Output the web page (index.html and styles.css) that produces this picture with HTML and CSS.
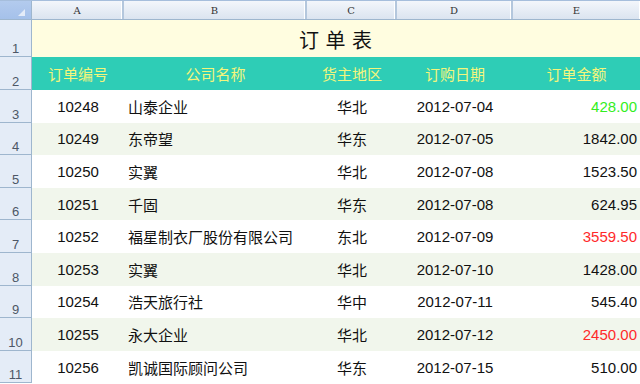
FILE: index.html
```html
<!DOCTYPE html>
<html lang="zh-CN">
<head>
<meta charset="utf-8">
<title>订单表</title>
<link rel="stylesheet" href="styles.css">
</head>
<body>
<div class="sheet">
  <div class="row colhead">
    <div class="corner"><span class="tri"></span></div>
    <div class="ch">A</div>
    <div class="ch">B</div>
    <div class="ch">C</div>
    <div class="ch">D</div>
    <div class="ch last">E</div>
  </div>
  <div class="row r-title">
    <div class="rh">1</div>
    <div class="title">订 单 表</div>
  </div>
  <div class="row r-head">
    <div class="rh">2</div>
    <div class="c">订单编号</div>
    <div class="c">公司名称</div>
    <div class="c">货主地区</div>
    <div class="c">订购日期</div>
    <div class="c">订单金额</div>
  </div>
  <div class="row r-data">
    <div class="rh">3</div><div class="c num">10248</div><div class="l">山泰企业</div><div class="c">华北</div><div class="c num">2012-07-04</div><div class="r num green">428.00</div>
  </div>
  <div class="row r-data alt">
    <div class="rh">4</div><div class="c num">10249</div><div class="l">东帝望</div><div class="c">华东</div><div class="c num">2012-07-05</div><div class="r num">1842.00</div>
  </div>
  <div class="row r-data">
    <div class="rh">5</div><div class="c num">10250</div><div class="l">实翼</div><div class="c">华北</div><div class="c num">2012-07-08</div><div class="r num">1523.50</div>
  </div>
  <div class="row r-data alt">
    <div class="rh">6</div><div class="c num">10251</div><div class="l">千固</div><div class="c">华东</div><div class="c num">2012-07-08</div><div class="r num">624.95</div>
  </div>
  <div class="row r-data">
    <div class="rh">7</div><div class="c num">10252</div><div class="l">福星制衣厂股份有限公司</div><div class="c">东北</div><div class="c num">2012-07-09</div><div class="r num red">3559.50</div>
  </div>
  <div class="row r-data alt">
    <div class="rh">8</div><div class="c num">10253</div><div class="l">实翼</div><div class="c">华北</div><div class="c num">2012-07-10</div><div class="r num">1428.00</div>
  </div>
  <div class="row r-data">
    <div class="rh">9</div><div class="c num">10254</div><div class="l">浩天旅行社</div><div class="c">华中</div><div class="c num">2012-07-11</div><div class="r num">545.40</div>
  </div>
  <div class="row r-data alt">
    <div class="rh">10</div><div class="c num">10255</div><div class="l">永大企业</div><div class="c">华北</div><div class="c num">2012-07-12</div><div class="r num red">2450.00</div>
  </div>
  <div class="row r-data">
    <div class="rh">11</div><div class="c num">10256</div><div class="l">凯诚国际顾问公司</div><div class="c">华东</div><div class="c num">2012-07-15</div><div class="r num">510.00</div>
  </div>
</div>
</body>
</html>
```
FILE: styles.css
```css
html, body {
  margin: 0;
  padding: 0;
  background: #ffffff;
}
.sheet {
  width: 640px;
  height: 384px;
  overflow: hidden;
  font-family: "Liberation Sans", "Noto Sans CJK SC", sans-serif;
  font-size: 15px;
  color: #111;
}
.row {
  display: grid;
  grid-template-columns: 32px 92px 183px 90px 116px 127px;
}
.colhead {
  height: 20px;
  box-sizing: border-box;
  border-top: 1px solid #a6bedc;
  border-bottom: 1px solid #9eb6ce;
}
.corner {
  background: linear-gradient(#b3cbee, #a5c1ea);
  border-right: 1px solid #9eb6ce;
  position: relative;
}
.tri {
  position: absolute;
  right: 6px;
  bottom: 3px;
  width: 0;
  height: 0;
  border-left: 7px solid transparent;
  border-bottom: 7px solid #e4ecf8;
}
.ch {
  background: linear-gradient(#f3f6fb, #dbe4f0);
  border-right: 2px solid #b4c7dd;
  box-shadow: inset -1px 0 0 #ffffff;
  font-family: "DejaVu Serif", "Liberation Serif", serif;
  font-size: 10px;
  color: #333;
  display: flex;
  align-items: center;
  justify-content: center;
  padding-top: 1px;
}
.ch.last {
  border-right: none;
}
.rh {
  background: #e4ecf7;
  border-right: 1px solid #9eb6ce;
  border-bottom: 1px solid #9eb6ce;
  box-sizing: border-box;
  font-family: "Liberation Sans", sans-serif;
  font-size: 13px;
  color: #4d5766;
  display: flex;
  align-items: flex-end;
  justify-content: center;
  line-height: 14px;
  padding-bottom: 0;
}
.r-title {
  height: 37px;
  background: #fffde0;
}
.title {
  grid-column: 2 / 7;
  display: flex;
  align-items: center;
  justify-content: center;
  font-family: "Noto Sans CJK SC", sans-serif;
  font-size: 20px;
  color: #111;
  padding-top: 2px;
  letter-spacing: 1px;
}
.r-head {
  height: 33px;
  background: #2ecdb6;
  color: #f4f57c;
}
.r-head .c {
  font-family: "Noto Sans CJK SC", sans-serif;
  font-size: 15px;
}
.r-data {
  height: 32.6px;
  background: #ffffff;
}
.r-data.alt {
  background: #f1f6ec;
}
.c, .l, .r {
  display: flex;
  align-items: center;
  white-space: nowrap;
}
.c {
  justify-content: center;
}
.l {
  justify-content: flex-start;
  padding-left: 4px;
  font-family: "Noto Sans CJK SC", sans-serif;
}
.r {
  justify-content: flex-end;
  padding-right: 3px;
}
.r-data .c {
  font-family: "Noto Sans CJK SC", sans-serif;
}
.r-data .num {
  font-family: "Liberation Sans", sans-serif;
}
.green {
  color: #33ee22;
}
.red {
  color: #ff2a2a;
}
```
